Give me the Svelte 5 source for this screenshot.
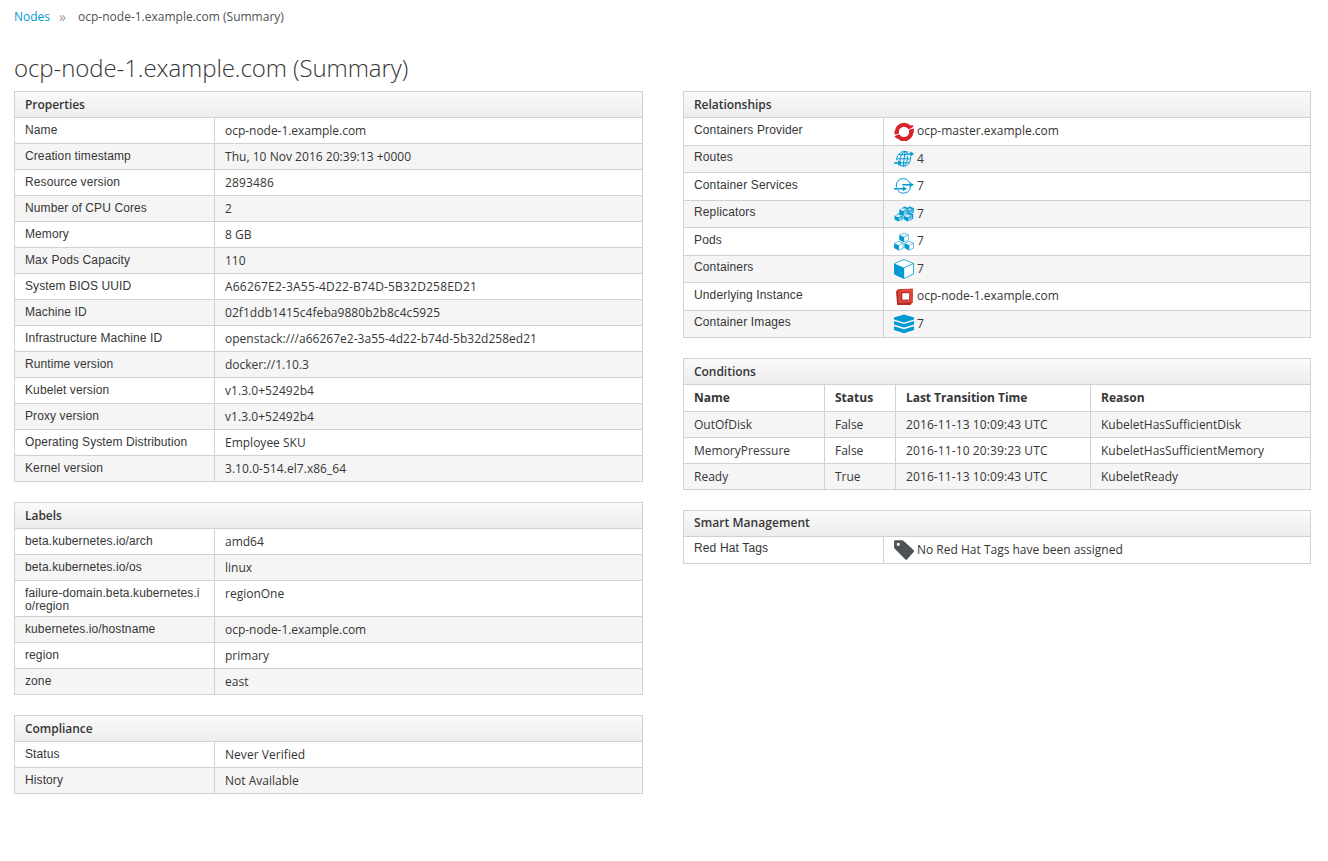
<script>
  const left = [
    {
      title: 'Properties',
      rows: [
        ['Name', 'ocp-node-1.example.com', -0.03],
        ['Creation timestamp', 'Thu, 10 Nov 2016 20:39:13 +0000', 0.03],
        ['Resource version', '2893486', 0.14],
        ['Number of CPU Cores', '2'],
        ['Memory', '8 GB'],
        ['Max Pods Capacity', '110'],
        ['System BIOS UUID', 'A66267E2-3A55-4D22-B74D-5B32D258ED21', 0.19],
        ['Machine ID', '02f1ddb1415c4feba9880b2b8c4c5925', 0.06],
        ['Infrastructure Machine ID', 'openstack:///a66267e2-3a55-4d22-b74d-5b32d258ed21', 0.02],
        ['Runtime version', 'docker://1.10.3'],
        ['Kubelet version', 'v1.3.0+52492b4', 0.05],
        ['Proxy version', 'v1.3.0+52492b4', 0.05],
        ['Operating System Distribution', 'Employee SKU'],
        ['Kernel version', '3.10.0-514.el7.x86_64', 0.05]
      ]
    },
    {
      title: 'Labels',
      rows: [
        ['beta.kubernetes.io/arch', 'amd64'],
        ['beta.kubernetes.io/os', 'linux'],
        ['failure-domain.beta.kubernetes.io/region', 'regionOne'],
        ['kubernetes.io/hostname', 'ocp-node-1.example.com', -0.03],
        ['region', 'primary'],
        ['zone', 'east']
      ]
    },
    {
      title: 'Compliance',
      rows: [
        ['Status', 'Never Verified', 0.05],
        ['History', 'Not Available']
      ]
    }
  ];

  const relationships = [
    ['Containers Provider', 'ocp-master.example.com', 'provider'],
    ['Routes', '4', 'route'],
    ['Container Services', '7', 'service'],
    ['Replicators', '7', 'replicator'],
    ['Pods', '7', 'pods'],
    ['Containers', '7', 'container'],
    ['Underlying Instance', 'ocp-node-1.example.com', 'instance'],
    ['Container Images', '7', 'images']
  ];

  const conditions = [
    ['OutOfDisk', 'False', '2016-11-13 10:09:43 UTC', 'KubeletHasSufficientDisk'],
    ['MemoryPressure', 'False', '2016-11-10 20:39:23 UTC', 'KubeletHasSufficientMemory'],
    ['Ready', 'True', '2016-11-13 10:09:43 UTC', 'KubeletReady']
  ];
</script>

{#snippet cube(x, y)}
  <g transform="translate({x} {y})">
    <path d="M4.7.4 9.1 2.2V7L4.7 9.2.3 7V2.2Z" fill="#fff" stroke="#0099d3" stroke-width=".6" />
    <path d="M.2 2.2 4.8 4.2V9.3L.2 7.1Z" fill="#0099d3" />
    <path d="M4.7 4.2 9.1 2.2" stroke="#0099d3" stroke-width=".6" />
  </g>
{/snippet}

{#snippet stack(x, y)}
  <g transform="translate({x} {y})">
    <path d="M2.2 1.2 5.2-.6 9.6.9V5.2L7 7.4Z" fill="#0099d3" />
    <path d="M3.9.8 8 2.3V6.2L4 8.3 0 6.2V2.3Z" fill="#0099d3" stroke="#f5f5f5" stroke-width=".5" />
    <path d="M3.9 1.3 7.2 2.5 4 3.9.8 2.5Z" fill="#e3f4fb" />
    <path d="M4.7 4.7 7.3 3.5V5.8L4.7 7.2Z" fill="#8fd2ec" />
  </g>
{/snippet}

{#snippet icon(kind)}
  <svg class="icon" viewBox="0 0 20 20" fill="none" aria-hidden="true">
    {#if kind === 'provider'}
      <ellipse cx="10" cy="9.9" rx="7.3" ry="7.2" stroke="#db212e" stroke-width="4" />
      <path d="M.2 9.6 4.6 8.2V11.2L.9 12.4ZM15.4 8.2 20 6.7 19.7 10.8 15.4 12ZM14 4.6 18.4 3 19.5 5 14.6 6.7ZM.6 14.2 5.2 12.7 6.6 14.7 2.2 16.4Z" fill="#db212e" />
      <path d="M13.8 8 20 5.7M0 13.7 6.2 11.6" stroke="#fff" stroke-width="1" />
      <path d="M14.9 8.6 19.7 7M1 14.7 5.5 13.1" stroke="#b51c28" stroke-width=".7" />
    {:else if kind === 'route'}
      <g stroke="#0099d3" stroke-width="1">
        <path d="M16.6 7.7C17 13 13.8 17.2 9.2 17.2 7.7 17.2 6.3 16.7 5.2 15.8M2.6 11.2C2.5 6.3 6.3 2.4 11 2.4 12 2.4 13 2.6 13.8 3" />
        <path d="M11 2.4C6.2 4.8 4.8 12.4 7.2 16.9M13.2 6.8C14.2 10.2 12.2 15.2 9.4 17.2M11 2.4 9.2 17.2M11 2.4C12 2.8 12.6 3.4 13 4M5 5.6H12.4M2.9 9.8H16.4M6.8 13.8H15.4" />
      </g>
      <path d="M12 5H17.2M0 14H4.6" stroke="#0099d3" stroke-width="1.5" />
      <path d="M16.3 2.3 20 5 16.3 7.7ZM4 11.3 7.7 14 4 16.7Z" fill="#0099d3" />
    {:else if kind === 'service'}
      <path d="M15.8 6A6.9 6.6 0 0 0 2.7 10.5M3.4 12.8A6.9 6.6 0 0 0 16.3 9.6" stroke="#0099d3" stroke-width="1" />
      <path d="M8.3 7.7H17M0 11.7H10" stroke="#0099d3" stroke-width="1.4" />
      <path d="M15.6 5.2 20 7.7 15.6 10.2ZM8.8 9.2 13 11.7 8.8 14.2Z" fill="#0099d3" />
    {:else if kind === 'replicator'}
      {@render stack(10.2, 3.2)}
      {@render stack(5, 3.2)}
      {@render stack(0.2, 9.4)}
      {@render stack(9.6, 9.4)}
    {:else if kind === 'pods'}
      {@render cube(5.3, 0.8)}
      {@render cube(0.1, 9)}
      {@render cube(10.5, 9)}
    {:else if kind === 'container'}
      <path d="M10 .5 19.5 4.5V15L10 19.5.5 15V4.5Z" fill="#fff" stroke="#0099d3" stroke-width=".8" />
      <path d="M.2 4.5 10.2 8.7V19.8L.2 15.2Z" fill="#0099d3" />
      <path d="M10 8.7 19.5 4.5" stroke="#0099d3" stroke-width=".8" />
    {:else if kind === 'instance'}
      <path d="M2 4.6 4.2 2 18.8 1.8 18.6 15.4 16.4 18 3.2 18Z" fill="#b52a24" />
      <path d="M4 2.6 18.8 1.8 18.5 15.6 4.5 16Z" fill="#de483c" />
      <path d="M7.2 5.2H15.4V13.3H7.2Z" fill="#a32620" />
      <path d="M8.3 6.2H15.1V12.6H8.3Z" fill="#fff" />
      <path d="M4 8.2H7.2M15.4 8.2H18.6M4 11H7.2M15.4 11H18.6" stroke="#c2352c" stroke-width=".5" />
    {:else if kind === 'images'}
      <path d="M0 3.4 10 .6 20 3.4V5.4L10 8.4 0 5.4ZM0 7 10 10 20 7V10.5L10 13.6 0 10.5ZM0 12.2 10 15.3 20 12.2V15.9L10 19.2 0 15.9Z" fill="#0099d3" />
    {:else}
      <path d="M1.3.2H7.5C8.4.2 9.3.5 10 1.2L19.5 10.1C20.2 10.8 20.2 11.5 19.5 12.2L13.2 19.3C12.5 20 11.9 20 11.2 19.3L1.5 9.6C.6 8.8.1 8 .1 7V1.4C.1.7.6.2 1.3.2ZM4.3 2.7A1.6 1.6 0 1 0 4.3 5.9 1.6 1.6 0 1 0 4.3 2.7Z" fill="#4d5258" fill-rule="evenodd" />
    {/if}
  </svg>
{/snippet}

<nav class="breadcrumb">
  <a href="#nodes">Nodes</a><span class="sep">»</span><span>ocp-node-1.example.com (Summary)</span>
</nav>
<h1>ocp-node-1.example.com (Summary)</h1>

<main>
  <div class="column">
    {#each left as panel}
      <section class="panel">
        <h2>{panel.title}</h2>
        {#each panel.rows as [label, value, tracking = 0]}
          <div class="row">
            <div class="label">{label}</div>
            <div class="value" style:letter-spacing="{tracking}px">{value}</div>
          </div>
        {/each}
      </section>
    {/each}
  </div>

  <div class="column">
    <section class="panel linked">
      <h2>Relationships</h2>
      {#each relationships as [label, value, kind]}
        <div class="row">
          <div class="label">{label}</div>
          <div class="value">{@render icon(kind)}<span>{value}</span></div>
        </div>
      {/each}
    </section>

    <section class="panel conditions">
      <h2>Conditions</h2>
      <div class="row head">
        <div>Name</div><div>Status</div><div>Last Transition Time</div><div>Reason</div>
      </div>
      {#each conditions as cells}
        <div class="row">
          {#each cells as cell}<div>{cell}</div>{/each}
        </div>
      {/each}
    </section>

    <section class="panel linked tags">
      <h2>Smart Management</h2>
      <div class="row">
        <div class="label">Red Hat Tags</div>
        <div class="value">{@render icon('tag')}<span>No Red Hat Tags have been assigned</span></div>
      </div>
    </section>
  </div>
</main>

<style>
  :global(body) {
    background: #fff;
    color: #363636;
    font: 12px/20px 'Open Sans', sans-serif;
  }
  .breadcrumb {
    display: flex;
    padding: 7px 14px 0;
    color: #4d5258;
  }
  a {
    color: #0099d3;
    text-decoration: none;
  }
  .sep {
    width: 28px;
    box-sizing: border-box;
    padding-left: 9px;
    font-size: 14px;
    color: #9c9c9c;
  }
  h1 {
    margin: 24px 14px 7px;
    font-size: 24px;
    line-height: 33px;
    font-weight: 300;
    letter-spacing: -0.08px;
  }
  main {
    display: grid;
    grid-template-columns: 629px 628px;
    column-gap: 40px;
    align-items: start;
    padding: 0 14px;
  }
  .column {
    display: grid;
    gap: 20px;
  }
  .panel {
    border: 1px solid #d1d1d1;
  }
  h2 {
    box-sizing: border-box;
    margin: 0;
    padding: 0 10px;
    height: 25px;
    font-size: 12px;
    line-height: 25px;
    font-weight: 600;
    letter-spacing: -0.04px;
    background: linear-gradient(#fafafa, #ededed);
  }
  .tags h2 {
    line-height: 23px;
    letter-spacing: 0.06px;
  }
  .row {
    display: grid;
    grid-template-columns: 199px 1fr;
    min-height: 25px;
    border-top: 1px solid #d1d1d1;
  }
  .row:nth-child(odd) {
    background: #f5f5f5;
  }
  .row > div + div {
    border-left: 1px solid #d1d1d1;
  }
  .label {
    padding: 6px 10px 3px;
    font-family: 'Liberation Sans', Arial, sans-serif;
    line-height: 13px;
    letter-spacing: 0.1px;
    word-break: break-all;
  }
  .value {
    padding: 3px 10px 0;
  }
  .linked .row {
    height: 27px;
  }
  .linked .row:nth-child(odd),
  .tags .row {
    height: 26px;
    min-height: 0;
  }
  .linked .row:nth-child(odd) .label,
  .tags .label {
    padding-top: 5px;
  }
  .linked .label {
    letter-spacing: 0.14px;
  }
  .linked .value {
    display: flex;
    gap: 3px;
    line-height: 19px;
  }
  .icon {
    flex: none;
    width: 20px;
    height: 20px;
    margin-top: 1px;
  }
  .linked .row:nth-child(odd) .icon,
  .tags .icon {
    margin-top: 0;
  }
  .conditions .row {
    grid-template-columns: 140px 71px 195px 1fr;
  }
  .conditions .row > div {
    padding: 3px 10px 0;
  }
  .conditions .row > div:nth-child(3) {
    letter-spacing: 0.1px;
  }
  .conditions .head {
    height: 26px;
    font-weight: 700;
  }
  .conditions .head > div:nth-child(3) {
    letter-spacing: -0.05px;
  }
</style>
